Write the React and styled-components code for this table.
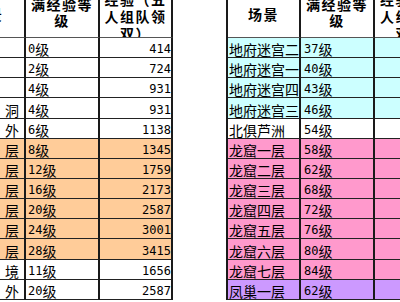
import React from "react";
import styled, { createGlobalStyle } from "styled-components";

const Global = createGlobalStyle`
  html, body { margin: 0; padding: 0; background: #fff; }
  body {
    width: 400px;
    height: 302px;
    overflow: hidden;
    font-family: "Noto Sans CJK SC", sans-serif;
    color: #000;
  }
`;

const TONES = {
  white: "#ffffff",
  orange: "#ffcc99",
  cyan: "#ccffff",
  pink: "#ff99cc",
  purple: "#cc99ff",
};

const Sheet = styled.div`
  display: flex;
  align-items: flex-start;
  gap: 53px;
  width: max-content;
  margin: -9px 0 0 -48px;
`;

const Table = styled.div`
  display: grid;
  grid-template-columns: ${(p) => p.$cols};
  grid-template-rows: 47px;
  grid-auto-rows: 20.15px;
  border-left: ${(p) => (p.$edge ? "2px solid #1a1a1a" : "none")};
`;

const HeadCell = styled.div`
  box-sizing: border-box;
  overflow: hidden;
  padding: ${(p) => p.$top}px 0 0;
  text-align: center;
  font-size: 14px;
  font-weight: 700;
  letter-spacing: 1.5px;
  line-height: ${(p) => p.$lh}px;
  border-right: 2px solid #1a1a1a;
  border-bottom: 1px solid #555;
  background: #fff;
`;

const Cell = styled.div`
  box-sizing: border-box;
  display: flex;
  align-items: flex-end;
  justify-content: ${(p) => p.$justify || "flex-start"};
  overflow: hidden;
  white-space: nowrap;
  padding: 0 ${(p) => p.$pr || 0}px 0 ${(p) => p.$pl || 0}px;
  font-size: 14px;
  line-height: 16px;
  background: ${(p) => TONES[p.$tone || "white"]};
  border-right: 2px solid #1a1a1a;
  border-bottom: 1px solid #222;
`;

const NameCell = styled(Cell)`
  justify-content: flex-end;
  letter-spacing: 5px;
`;

const Num = styled.span`
  font-family: "DejaVu Sans Mono", monospace;
  font-size: 12px;
  letter-spacing: 0;
`;

const leftRows = [
  { name: "", lv: 0, exp: 414 },
  { name: "", lv: 2, exp: 724 },
  { name: "", lv: 4, exp: 931 },
  { name: "东海岩洞", lv: 4, exp: 931 },
  { name: "江南野外", lv: 6, exp: 1138 },
  { name: "大雁塔一层", lv: 8, exp: 1345, tone: "orange" },
  { name: "大雁塔二层", lv: 12, exp: 1759, tone: "orange" },
  { name: "大雁塔三层", lv: 16, exp: 2173, tone: "orange" },
  { name: "大雁塔四层", lv: 20, exp: 2587, tone: "orange" },
  { name: "大雁塔五层", lv: 24, exp: 3001, tone: "orange" },
  { name: "大雁塔六层", lv: 28, exp: 3415, tone: "orange" },
  { name: "大唐国境", lv: 11, exp: 1656 },
  { name: "大唐境外", lv: 20, exp: 2587 },
];

const rightRows = [
  { name: "地府迷宫二", lv: 37, tone: "cyan" },
  { name: "地府迷宫一", lv: 40, tone: "cyan" },
  { name: "地府迷宫四", lv: 43, tone: "cyan" },
  { name: "地府迷宫三", lv: 46, tone: "cyan" },
  { name: "北俱芦洲", lv: 54 },
  { name: "龙窟一层", lv: 58, tone: "pink" },
  { name: "龙窟二层", lv: 62, tone: "pink" },
  { name: "龙窟三层", lv: 68, tone: "pink" },
  { name: "龙窟四层", lv: 72, tone: "pink" },
  { name: "龙窟五层", lv: 76, tone: "pink" },
  { name: "龙窟六层", lv: 80, tone: "pink" },
  { name: "龙窟七层", lv: 84, tone: "pink" },
  { name: "凤巢一层", lv: 62, tone: "purple" },
];

function Header() {
  return (
    <>
      <HeadCell $top={15} $lh={16}>场景</HeadCell>
      <HeadCell $top={5} $lh={16}>满经验等级</HeadCell>
      <HeadCell $top={0} $lh={17}>经验（五人组队领双）</HeadCell>
    </>
  );
}

function LeftTable() {
  return (
    <Table $cols="74px 74px 73px">
      <Header />
      {leftRows.map((r, i) => (
        <React.Fragment key={i}>
          <NameCell $tone={r.tone}>{r.name}</NameCell>
          <Cell $tone={r.tone} $pl={2}>
            <Num>{r.lv}</Num>级
          </Cell>
          <Cell $tone={r.tone} $justify="flex-end">
            <Num>{r.exp}</Num>
          </Cell>
        </React.Fragment>
      ))}
    </Table>
  );
}

function RightTable() {
  return (
    <Table $cols="73px 74px 74px" $edge>
      <Header />
      {rightRows.map((r, i) => (
        <React.Fragment key={i}>
          <Cell $tone={r.tone} $pl={1}>{r.name}</Cell>
          <Cell $tone={r.tone} $pl={3}>
            <Num>{r.lv}</Num>级
          </Cell>
          <Cell $tone={r.tone} />
        </React.Fragment>
      ))}
    </Table>
  );
}

export default function App() {
  return (
    <>
      <Global />
      <Sheet>
        <LeftTable />
        <RightTable />
      </Sheet>
    </>
  );
}
